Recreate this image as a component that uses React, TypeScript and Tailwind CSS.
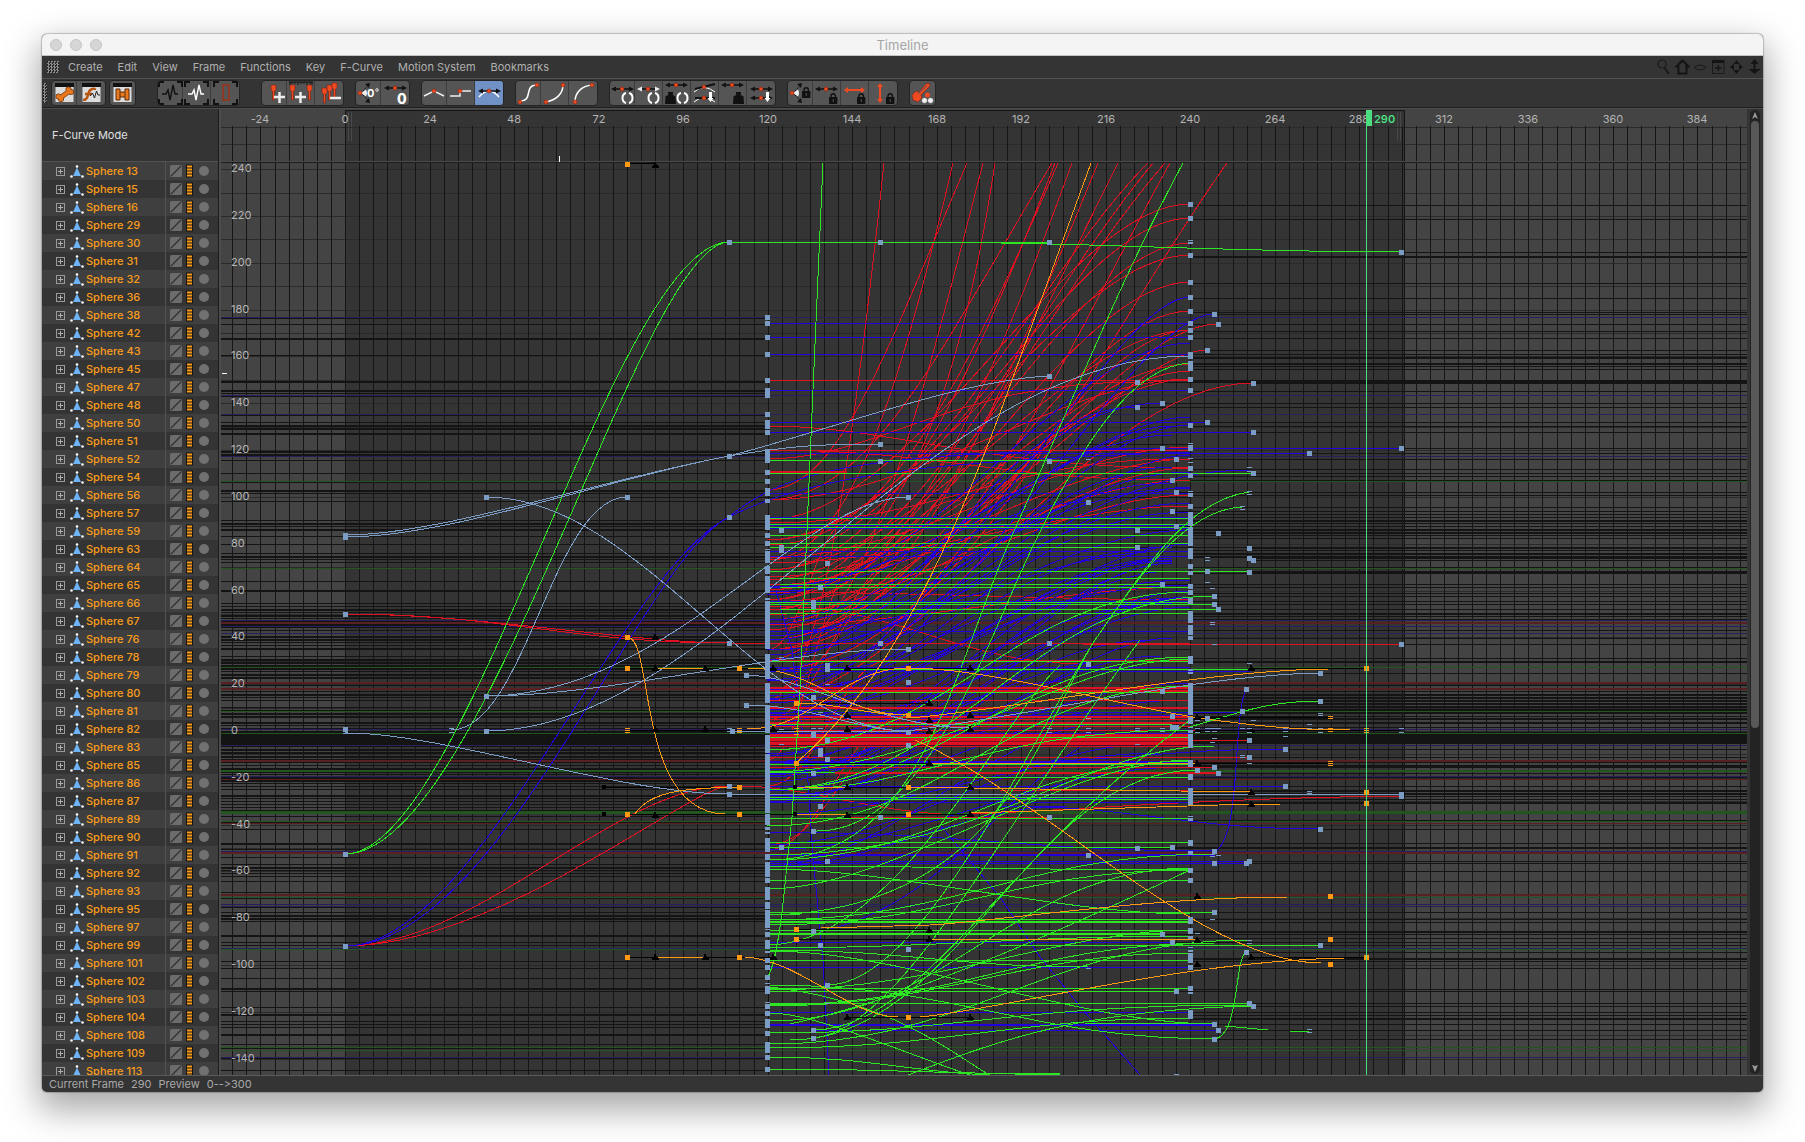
import type { ReactNode } from "react";

const MENUS = ["Create", "Edit", "View", "Frame", "Functions", "Key", "F-Curve", "Motion System", "Bookmarks"];

const SPHERES = [
  13, 15, 16, 29, 30, 31, 32, 36, 38, 42, 43, 45, 47, 48, 50, 51, 52, 54, 56, 57, 59, 63, 64, 65, 66, 67, 76, 78, 79,
  80, 81, 82, 83, 85, 86, 87, 89, 90, 91, 92, 93, 95, 97, 99, 101, 102, 103, 104, 108, 109, 113,
];

const RED = "#dd1122";
const GREEN = "#2de622";
const BLUE = "#2200dd";
const STEEL = "#7b9cc4";
const ORANGE = "#ff9911";
const KEY_RED = "#f04a23";

/* ---------- graph data (window coordinates, shifted by the plot group) ---------- */

const LEFT = 221;
const TOP = 109;
const ZERO_X = 345;
const FRAME_W = 3.522;
const ZERO_Y = 731;
const UNIT_H = 2.341;

const frameX = (f: number) => Math.round(ZERO_X + f * FRAME_W);
const valueY = (v: number) => Math.round(ZERO_Y - v * UNIT_H);

// runs of keys stacked at frame 120 and frame 240: [top, bottom]
const COL_120: [number, number][] = [
  [315, 320], [321, 326], [335, 340], [352, 357], [378, 383], [388, 398], [412, 417], [420, 429], [430, 435],
  [449, 463], [470, 475], [479, 484], [488, 496], [499, 503], [515, 530], [533, 538], [541, 546], [549, 550],
  [551, 563], [566, 574], [576, 593], [598, 600], [601, 649], [654, 679], [683, 703], [705, 733], [735, 753],
  [754, 813], [814, 825], [827, 830], [832, 834], [838, 852], [854, 860], [862, 877], [878, 883], [887, 900],
  [902, 909], [910, 928], [929, 930], [932, 937], [940, 949], [951, 953], [958, 963], [965, 970], [975, 980],
  [983, 984], [986, 994], [1002, 1003], [1004, 1009], [1011, 1016], [1019, 1028], [1031, 1036], [1042, 1053],
  [1055, 1060], [1067, 1072],
];

const COL_240: [number, number][] = [
  [202, 207], [216, 221], [240, 241], [242, 244], [253, 258], [280, 285], [295, 300], [309, 314], [321, 326],
  [328, 333], [335, 340], [352, 359], [361, 371], [377, 382], [388, 393], [423, 428], [443, 444], [445, 451],
  [458, 459], [462, 463], [466, 471], [473, 478], [491, 492], [493, 497], [504, 509], [512, 526], [527, 546],
  [548, 559], [564, 569], [571, 575], [584, 589], [590, 595], [598, 604], [611, 623], [625, 635], [636, 640],
  [656, 664], [669, 671], [672, 674], [683, 715], [717, 724], [727, 728], [730, 733], [734, 748], [760, 767],
  [774, 780], [788, 805], [816, 817], [818, 821], [840, 846], [851, 855], [868, 873], [878, 883], [917, 924],
  [928, 934], [936, 939], [947, 948], [950, 952], [953, 963], [965, 970], [986, 991], [992, 994], [1010, 1019],
];

// x -> y list of single keys
const KEYS: [number, number[]][] = [
  [345, [535, 537, 614, 729, 854, 946]],
  [486, [497, 696, 731]],
  [627, [497]],
  [729, [242, 456, 517, 643, 786, 794]],
  [732, [731]],
  [746, [675, 705]],
  [781, [530, 547, 550, 847]],
  [813, [602, 606, 697, 735, 773, 831, 931, 1030, 1038]],
  [820, [587, 750, 754, 806, 945]],
  [827, [563, 665, 669, 740, 759, 861, 985]],
  [880, [242, 444, 461, 643, 817]],
  [908, [497, 649, 682, 732, 745, 949]],
  [1049, [242, 376, 461, 643, 817]],
  [1088, [502, 664, 855]],
  [1137, [382, 407, 530, 547, 848]],
  [1162, [403, 448, 584, 691, 934]],
  [1172, [480, 511, 716, 727, 847, 942]],
  [1176, [459, 492, 526, 727, 991]],
  [1197, [770]],
  [1207, [350, 422, 571, 718]],
  [1214, [314, 596, 604, 767, 851, 863, 912, 1024, 1039]],
  [1218, [324, 533, 609, 773, 1030]],
  [1242, [711]],
  [1246, [689, 863, 952]],
  [1249, [548, 558, 572, 740, 757, 861, 1003]],
  [1253, [383, 432, 473, 560, 1006]],
  [1285, [749, 786]],
  [1309, [453]],
  [1320, [673, 701, 829, 945]],
  [1401, [252, 448, 644, 794, 796]],
];

// overlapping keys that only leave thin slivers
const SLIVERS: [number, number[]][] = [
  [345, [733]],
  [451, [728, 732]],
  [729, [728, 731]],
  [781, [657, 729, 744]],
  [813, [611, 728, 732, 991]],
  [820, [712, 728, 748]],
  [827, [684, 1003]],
  [880, [728, 731]],
  [1049, [728, 732]],
  [1088, [459, 718, 728, 732, 968]],
  [1137, [728, 730, 744]],
  [1162, [728, 731]],
  [1197, [720, 728, 732, 933]],
  [1207, [557, 560, 582, 728, 731]],
  [1212, [588, 622, 624, 728, 742, 854, 856, 919]],
  [1214, [644, 728, 731, 738]],
  [1218, [728, 855]],
  [1242, [506, 509, 728, 755, 757]],
  [1249, [467, 471, 491, 494, 663, 728, 732, 763, 940, 943]],
  [1253, [381, 720]],
  [1285, [728, 731, 736]],
  [1309, [724, 728, 791, 793, 1029, 1032]],
  [1320, [713, 715, 728, 732]],
  [1401, [728, 732]],
  [1176, [1074]],
];

const ORANGE_KEYS: [number, number[]][] = [
  [627, [164, 637, 668, 814, 957]],
  [739, [668, 787, 814, 957]],
  [796, [703, 763, 929, 939]],
  [908, [668, 715, 787, 814, 1017]],
  [1330, [896, 939, 964]],
  [1366, [668, 792, 803, 957]],
];

const ORANGE_SLIVERS: [number, number[]][] = [
  [627, [728, 730, 732]],
  [739, [728, 730, 732]],
  [796, [717, 728, 731, 734]],
  [1330, [716, 718, 728, 731, 761, 763, 765]],
  [1366, [728, 730, 732]],
];

const HANDLES: [number, number[]][] = [
  [655, [165, 637, 668, 729, 815, 957]],
  [705, [668, 729, 957]],
  [773, [668, 729, 957]],
  [847, [668, 715, 729, 787, 815, 1017]],
  [929, [703, 720, 731, 763, 930, 939]],
  [970, [668, 715, 729, 787, 814, 1017]],
  [1197, [717, 730, 763, 896, 940, 964]],
  [1251, [668, 730, 792, 804, 957]],
];

const DOTS: [number, number][] = [[604, 787], [604, 814], [795, 787], [795, 814]];

// dim out-of-range curves: [y, height]
const DIM: { color: string; rows: [number, number][] }[] = [
  { color: "#27205c", rows: [[317, 1], [395, 1], [414, 1], [456, 1], [620, 1], [626, 1], [633, 1], [729, 1], [745, 1], [776, 1], [851, 1], [904, 1], [906, 1], [948, 1], [1057, 1]] },
  { color: "#22561f", rows: [[481, 1], [568, 1], [667, 1], [711, 1], [733, 1], [770, 2], [811, 3], [821, 1], [897, 1], [949, 1], [1047, 1], [1050, 1]] },
  { color: "#5a1f22", rows: [[622, 2], [682, 2], [688, 2], [760, 2], [779, 1], [823, 1], [852, 2], [894, 2]] },
];

// flat curves: [x0, x1, y, height]
const FLAT: { color: string; rows: [number, number, number, number][] }[] = [
  {
    color: BLUE,
    rows: [
      [770, 1190, 323, 1], [770, 1190, 337, 1], [770, 1190, 354, 1], [770, 1190, 390, 1], [770, 1207, 422, 1],
      [770, 1253, 432, 1], [770, 1309, 453, 1], [1075, 1401, 448, 1], [770, 1190, 493, 1], [770, 1190, 517, 1],
      [770, 1190, 525, 1], [770, 1190, 528, 1], [770, 1190, 551, 1], [770, 1190, 556, 1], [770, 1190, 601, 1],
      [770, 1190, 631, 1], [770, 1190, 667, 1], [770, 1250, 671, 1], [770, 1242, 712, 1], [770, 1190, 715, 1],
      [770, 1190, 733, 1], [770, 1190, 761, 2], [770, 1285, 786, 1], [770, 1190, 798, 1], [770, 1190, 802, 1],
      [770, 1190, 842, 1], [770, 1215, 854, 2], [770, 1246, 861, 1], [770, 1246, 863, 1], [770, 1172, 942, 1],
      [770, 1190, 967, 1], [770, 1190, 1012, 1], [770, 1214, 1024, 2], [813, 1218, 1030, 1], [770, 860, 930, 1],
    ],
  },
  {
    color: GREEN,
    rows: [
      [729, 1049, 242, 1], [770, 1068, 460, 1], [767, 1253, 473, 1], [770, 1190, 518, 1], [770, 1190, 524, 1],
      [770, 1190, 527, 1], [770, 1190, 535, 1], [770, 1190, 543, 1], [770, 1137, 547, 1], [770, 1249, 571, 1],
      [780, 1190, 578, 1], [780, 1162, 584, 1], [780, 1190, 587, 1], [770, 1190, 602, 1], [770, 1214, 604, 1],
      [780, 1218, 609, 1], [770, 1190, 613, 1], [770, 1190, 661, 1], [827, 1250, 669, 1], [770, 1190, 692, 1],
      [770, 1172, 724, 1], [770, 1190, 764, 1], [770, 880, 772, 1], [916, 1190, 777, 1], [770, 1190, 797, 1],
      [770, 1190, 799, 1], [770, 1190, 818, 1], [770, 1190, 842, 1], [770, 1172, 847, 1], [770, 1190, 880, 1],
      [770, 1214, 912, 1], [770, 1190, 919, 1], [770, 1190, 921, 2], [770, 1190, 930, 1], [770, 1162, 933, 2],
      [1000, 1320, 945, 1], [770, 1190, 960, 1], [770, 1190, 988, 1], [770, 1176, 991, 1], [770, 1249, 1003, 1],
      [770, 800, 914, 1], [1085, 1214, 1023, 1], [1015, 1060, 1074, 1],
    ],
  },
  {
    color: RED,
    rows: [
      [770, 1190, 380, 1], [770, 847, 471, 2], [770, 1190, 450, 1], [729, 1190, 643, 1], [1083, 1401, 644, 1],
      [770, 1190, 660, 1], [770, 1190, 687, 2], [770, 1190, 690, 2], [770, 1190, 700, 1], [770, 1190, 707, 2],
      [770, 1190, 716, 2], [770, 1190, 719, 1], [770, 1190, 722, 2], [770, 1190, 726, 1], [770, 1285, 730, 1],
      [770, 1190, 734, 3], [770, 1190, 738, 4], [770, 1190, 742, 4], [1190, 1249, 740, 1], [770, 1190, 746, 1],
      [770, 1249, 757, 1], [770, 1214, 767, 1], [835, 1218, 772, 2], [850, 1049, 817, 1], [1000, 1190, 790, 1],
    ],
  },
];

const ease = (x0: number, y0: number, x1: number, y1: number, a = 0.42, b = 0.42) =>
  `M${x0} ${y0}C${x0 + (x1 - x0) * a} ${y0} ${x1 - (x1 - x0) * b} ${y1} ${x1} ${y1}`;

// small seeded generator so the fans of curves are the same on every load
function seeded(seed: number) {
  let s = seed;
  return () => {
    s = (s * 16807) % 2147483647;
    return s / 2147483647;
  };
}

// curves that leave through the top edge: start y, exit x, end handle x, end handle y
const redTop: [number, number, number, number][] = [
  [700, 884, 846, 520], [560, 953, 893, 420], [490, 967, 885, 355], [660, 983, 910, 450], [590, 995, 955, 430],
  [500, 1052, 940, 350], [570, 1055, 955, 420], [545, 1058, 940, 440], [610, 1072, 975, 430], [640, 1098, 985, 440],
  [625, 1118, 990, 420], [540, 1148, 1030, 280], [580, 1153, 1015, 330], [600, 1165, 1020, 330], [650, 1170, 1060, 360],
  [670, 1227, 1080, 370],
];

const redCurves = [
  ease(345, 614, 729, 643),
  ease(345, 614, 729, 643, 0.35, 0.25),
  ease(345, 946, 729, 786, 0.35, 0.3),
  ease(345, 946, 729, 786, 0.4, 0.1),
  ...redTop.map(([y0, x, hx, hy]) => `M767 ${y0}C${Math.round(767 + (hx - 767) * 0.6)} ${y0} ${hx} ${hy} ${x} 163`),
  ...[
    [520, 204], [560, 218], [600, 243], [540, 255], [610, 282], [650, 311], [570, 330], [630, 371], [590, 379],
    [500, 379], [700, 330], [558, 447], [577, 459], [615, 468], [602, 495], [563, 506], [590, 364], [585, 480],
    [592, 600], [625, 587],
  ].map(([a, b]) => ease(767, a, 1190, b, 0.35, 0.3)),
  ease(767, 426, 1190, 468, 0.3, 0.5),
  ease(767, 459, 1137, 382, 0.3, 0.5),
  ease(767, 450, 1172, 480),
  ease(767, 523, 1176, 459),
  ease(767, 640, 1218, 324, 0.35, 0.25),
  ease(767, 620, 1207, 350, 0.35, 0.2),
  ease(767, 700, 1253, 383, 0.3, 0.35),
  ease(770, 606, 1088, 664),
  ease(739, 786, 970, 815, 0.3, 0.4),
  "M970 814C1050 812 1200 798 1401 796",
  ease(767, 786, 890, 660), ease(767, 850, 900, 720), ease(767, 845, 930, 700), ease(767, 760, 860, 560),
  ease(767, 720, 900, 560), ease(767, 650, 850, 520), ease(767, 690, 960, 500),
];

const rb = seeded(4177);
const blueCurves = [
  "M345 946C480 946 620 570 729 517C790 465 880 452 1190 448",
  "M345 946C500 946 640 560 729 517C820 470 960 461 1190 452",
  ease(767, 700, 1190, 297, 0.35, 0.2),
  ease(767, 720, 1214, 314, 0.35, 0.2),
  ease(767, 640, 1162, 403),
  ease(767, 660, 1137, 407),
  ease(767, 690, 1190, 425, 0.35, 0.3),
  ease(767, 620, 1088, 502),
  ease(767, 650, 1249, 470),
  ...Array.from({ length: 34 }, () => {
    const y0 = 580 + rb() * 220;
    const y1 = y0 - 70 - rb() * 190;
    const x1 = rb() > 0.3 ? 1190 : 1172;
    return ease(767, Math.round(y0), x1, Math.round(y1), 0.3 + rb() * 0.15, 0.25 + rb() * 0.2);
  }),
  ...Array.from({ length: 9 }, () => {
    const y0 = 760 + rb() * 110;
    return ease(767, Math.round(y0), 1000 + Math.round(rb() * 190), Math.round(y0 - 60 - rb() * 90), 0.35, 0.35);
  }),
  "M776 590L792 650L807 767L813 857L823 960L829 1075",
  "M940 825L1000 897L1040 957L1083 1010L1140 1075",
  "M1214 852C1242 840 1232 720 1246 689",
  ease(1000, 806, 1320, 829),
  ease(1000, 762, 1285, 749),
  ease(770, 832, 1214, 851),
  "M827 930C950 900 1000 790 1100 735",
];

const greenCurves = [
  ease(345, 854, 729, 242, 0.32, 0.3),
  "M345 854C485 854 640 242 729 242",
  "M1000 243C1100 244 1250 252 1401 252",
  "M823 163L813 390L804 600L800 690L792 817L782 913C777 950 773 970 767 978",
  "M1183 163C1120 280 1060 430 1010 540C950 680 920 858 770 860",
  "M1190 363C1130 366 1080 450 1037 538C990 630 930 835 813 831",
  "M1249 492C1190 500 1150 560 1093 643C1020 760 920 985 827 985",
  "M1242 507C1180 510 1130 590 1093 643C1040 730 1000 910 770 915",
  ease(767, 750, 1190, 592),
  ease(767, 790, 1214, 596),
  ease(767, 772, 1190, 659, 0.4, 0.3),
  ease(767, 790, 1190, 657),
  ease(767, 826, 1190, 686),
  "M1190 727C1240 712 1270 701 1320 701",
  ease(780, 790, 1190, 730, 0.35, 0.5),
  ease(767, 855, 1214, 746, 0.5, 0.3),
  ease(767, 860, 1190, 761),
  ease(790, 1040, 1197, 770),
  "M813 1030C920 1030 1000 860 1190 720",
  "M770 945C900 940 1000 720 1060 665",
  "M813 1038C900 1030 1000 830 1140 640",
  ease(767, 869, 1190, 914, 0.3, 0.3),
  ease(767, 889, 1190, 760, 0.3, 0.3),
  ease(770, 925, 1190, 870),
  ease(770, 920, 1212, 854),
  ease(770, 866, 1190, 870),
  ease(770, 948, 1190, 936),
  ease(770, 950, 1088, 967),
  ease(770, 990, 1190, 930, 0.4, 0.3),
  ease(770, 1005, 1214, 943),
  ease(770, 1006, 1190, 953),
  ease(770, 1021, 1190, 868),
  ease(770, 1033, 1249, 1005, 0.4, 0.5),
  ease(770, 1044, 1249, 940),
  ease(770, 1048, 1190, 1018),
  ease(770, 951, 1214, 1024, 0.3, 0.3),
  ease(770, 985, 1218, 1039),
  ease(770, 1013, 1120, 1110, 0.2, 0.3),
  ease(770, 1057, 1030, 1076),
  ease(770, 1069, 1060, 1074),
  "M790 1024C900 1000 1020 950 1190 870",
  "M908 1075C1000 1040 1080 1010 1253 1006",
  "M770 987C900 1002 960 1060 990 1075",
  "M1214 1039C1240 1036 1234 960 1246 952",
  "M1225 1026L1268 1030M1290 1031L1309 1031",
];

const steelCurves = [
  "M345 535C440 535 600 480 729 456C830 430 960 380 1049 376",
  "M345 537C450 537 610 478 729 456C790 446 820 444 880 444",
  ease(486, 497, 908, 731, 0.37, 0.35),
  ease(451, 730, 627, 497),
  "M486 696C670 696 800 497 908 497",
  "M486 731C720 731 920 356 1190 356",
  ease(486, 696, 908, 649, 0.3, 0.3),
  "M345 733C440 732 620 794 729 794L1401 794",
  ease(746, 675, 970, 728, 0.25, 0.4),
  ease(746, 705, 908, 731, 0.4, 0.3),
  "M732 731L908 731C1050 712 1200 675 1320 673",
];

const orangeCurves = [
  "M627 637C655 637 635 812 725 814",
  "M635 814C650 790 690 788 739 787",
  "M655 668H705M655 957H705M796 787H847M796 814H847M908 787H970",
  "M745 957C800 960 850 1017 898 1017",
  "M920 1017C1000 1010 1180 961 1345 958",
  "M915 740C1050 800 1200 963 1321 963",
  "M796 763C870 700 930 600 1000 413L1091 163",
  ease(748, 668, 908, 715),
  ease(747, 729, 908, 668),
  "M908 668C1000 668 1150 715 1230 722C1280 729 1320 730 1350 730",
  "M908 718C1000 712 1200 670 1328 669",
  ease(796, 703, 908, 715),
  "M970 788L1250 792M970 813L1250 804H1280M929 763H1195M932 939H1195",
  "M821 928L930 925C1000 921 1150 897 1287 897",
];

const blackCurves =
  "M627 163H655M627 668H739M739 668H773M627 957H773M847 668H970M847 787H908M604 787H739M627 814H847M796 703H929M796 929H929M796 939H929M796 763H929M847 1017H970M1251 668H1366M1197 763H1330M1197 717H1330M1197 730H1401M1251 957H1366M847 814H970M627 730H796";

// extrapolation lines that leave the outer keys
function extrapolation(runs: [number, number][], seed: number) {
  const r = seeded(seed);
  const rows: [number, number][] = [];
  runs.forEach(([a, b]) => {
    if (b - a < 3) return;
    if (b - a < 7) {
      rows.push([Math.round((a + b) / 2), r() > 0.8 ? 2 : 1]);
      return;
    }
    for (let y = a + 2; y < b; y += 3) if (r() > 0.08) rows.push([y, r() > 0.6 ? 2 : 1]);
  });
  return rows;
}

const leftRows = extrapolation(COL_120, 991);
const rightRows = extrapolation(COL_240, 373);

function Squares({ data, color }: { data: [number, number[]][]; color: string }) {
  return (
    <g fill={color}>
      {data.map(([x, ys]) => ys.map((y) => <rect key={`${x}-${y}`} x={x - 2} y={y - 2} width="5" height="5" />))}
    </g>
  );
}

function Slivers({ data, color }: { data: [number, number[]][]; color: string }) {
  return (
    <g fill={color}>
      {data.map(([x, ys]) => ys.map((y) => <rect key={`${x}-${y}`} x={x - 2} y={y} width="5" height="1" />))}
    </g>
  );
}

function Curves({ paths, color }: { paths: string[]; color: string }) {
  return <path d={paths.join("")} fill="none" stroke={color} strokeWidth="1" />;
}

function Graph() {
  const frames = Array.from({ length: 300 }, (_, i) => -32 + i * 4);
  const values = Array.from({ length: 60 }, (_, i) => 240 - i * 10);

  return (
    <svg className="block h-full w-full" role="img" aria-label="F-Curve graph" shapeRendering="crispEdges">
      <g transform={`translate(${-LEFT} ${-TOP})`}>
        <rect x={LEFT} y={TOP} width="4000" height="3000" fill="#444444" />
        <rect x="345" y="110" width="1059" height="3000" fill="#343434" />
        <path d="M345 110h1060v17h-1v-16h-1058v16h-1z" fill="#151515" />
        <path d="M348 112v29M351 112v29M1397 112v29M1400 112v29" stroke="#484848" />

        {/* grid */}
        <path d="M221 127h4000M221 144h4000" stroke="#2a2a2a" />
        <path d={values.map((v) => `M221 ${valueY(v)}h4000`).join("")} stroke="#2a2a2a" />
        <path d={frames.map((f) => `M${frameX(f)} 126v3000`).join("") + "M1404 126v3000"} stroke="#151515" />
        <rect x={LEFT} y="161" width="4000" height="1" fill="#4c4c4c" />
        <rect x={LEFT} y="162" width="4000" height="1" fill="#1c1c1c" />
        <path d="M559 156v6M222 373h5" stroke="#ffffff" />

        <g fill="#141414">
          {leftRows.map(([y, h]) => <rect key={y} x={LEFT} y={y} width={767 - LEFT} height={h} />)}
          {rightRows.map(([y, h]) => <rect key={y} x="1190" y={y} width="3000" height={h} />)}
          {KEYS.filter(([x]) => x > 1130).map(([x, ys]) =>
            ys.map((y) => <rect key={`${x}-${y}`} x={x} y={y} width="3000" height="1" />)
          )}
          <rect x={LEFT} y="734" width="546" height="11" />
          <rect x="1190" y="734" width="3000" height="10" />
          <rect x="627" y="497" width="563" height="1" />
          <rect x="880" y="444" width="310" height="1" />
          <rect x="908" y="649" width="282" height="1" />
        </g>

        {DIM.map(({ color, rows }) => (
          <g key={color} fill={color}>
            {rows.map(([y, h]) => <rect key={y} x={LEFT} y={y} width="4000" height={h} />)}
          </g>
        ))}

        {/* value labels */}
        <g fill="#b4b4b4" fontSize="11" fontFamily="Inter, sans-serif">
          {values.filter((v) => v % 20 === 0 && v >= -140).map((v) => (
            <text key={v} x="231" y={valueY(v) + 3}>{v}</text>
          ))}
        </g>

        {/* curves */}
        <Curves paths={redCurves} color={RED} />
        <Curves paths={blueCurves} color={BLUE} />
        {FLAT.map(({ color, rows }) => (
          <g key={color} fill={color}>
            {rows.map(([x0, x1, y, h]) => <rect key={`${x0}-${y}`} x={x0} y={y} width={x1 - x0} height={h} />)}
          </g>
        ))}
        <rect x="770" y="737" width="420" height="1" fill={GREEN} />
        <rect x="770" y="741" width="420" height="1" fill="#7a1420" />
        <rect x="770" y="745" width="420" height="1" fill="#3a1030" />
        <Curves paths={greenCurves} color={GREEN} />
        <path d={blackCurves} stroke="#000000" />
        <Curves paths={steelCurves} color={STEEL} />
        <Curves paths={orangeCurves} color={ORANGE} />

        {/* keys */}
        <g fill={STEEL}>
          {COL_120.map(([a, b]) => <rect key={a} x="765" y={a} width="5" height={b - a} />)}
          {COL_240.map(([a, b]) => <rect key={a} x="1188" y={a} width="5" height={b - a} />)}
        </g>
        <g fill="#000000">
          {HANDLES.map(([x, ys]) =>
            ys.map((y) => <path key={`${x}-${y}`} d={`M${x - 1} ${y - 3}h2l1 3l2 1v2h-7v-2l2 -1z`} />)
          )}
          {DOTS.map(([x, y]) => <circle key={`${x}-${y}`} cx={x} cy={y} r="2.5" />)}
        </g>
        <Squares data={KEYS} color={STEEL} />
        <Slivers data={SLIVERS} color={STEEL} />
        <Squares data={ORANGE_KEYS} color={ORANGE} />
        <Slivers data={ORANGE_SLIVERS} color={ORANGE} />

        {/* ruler labels */}
        <g fill="#b4b4b4" fontSize="11" fontFamily="Inter, sans-serif" textAnchor="middle">
          {Array.from({ length: 18 }, (_, i) => -24 + i * 24).map((f) => (
            <text key={f} x={frameX(f)} y="123">{f}</text>
          ))}
        </g>

        {/* playhead */}
        <rect x="1366" y="110" width="6" height="16" fill="#4ade80" />
        <rect x="1366" y="110" width="1" height="3000" fill="#4ade80" />
        <rect x="1373" y="112" width="22" height="14" fill="#343434" />
        <text x="1374" y="123" fill="#4ade80" fontSize="11" fontWeight="600" fontFamily="Inter, sans-serif">290</text>
      </g>
    </svg>
  );
}

/* ---------- toolbar icons, drawn on a 27 x 26 board ---------- */

const Node = ({ x, y }: { x: number; y: number }) => <circle cx={x} cy={y} r="2" fill={KEY_RED} stroke="#7a1c08" strokeWidth="0.5" />;

const Bar = ({ y, tips = "#111111", x = 2 }: { y: number; tips?: string; x?: number }) => (
  <>
    <path d={`M${x + 3} ${y}h17`} stroke="#111111" strokeWidth="1.4" />
    <path d={`M${x} ${y}l5 -2.5v5zM${x + 23} ${y}l-5 -2.5v5z`} fill={tips} />
    <Node x={x + 11} y={y} />
  </>
);

const Lock = ({ x, y }: { x: number; y: number }) => (
  <>
    <path d={`M${x + 2} ${y + 5}v-2a2.2 2.2 0 0 1 4.400 0v2`} fill="none" stroke="#111111" strokeWidth="1.4" />
    <rect x={x} y={y + 4} width="8.400" height="7" rx="0.8" fill="#111111" />
    <rect x={x + 3.7} y={y + 6} width="1" height="3" fill="#555555" />
  </>
);

const Parens = ({ x, y }: { x: number; y: number }) => (
  <path d={`M${x + 4} ${y}q-3.500 1 -3.500 5t3.500 5M${x + 7} ${y}q3.500 1 3.500 5t-3.500 5`} fill="none" stroke="#ffffff" strokeWidth="2" />
);

const Weight = ({ x }: { x: number }) => (
  <path d={`M${x + 3} 12h5v2.500h-1l3.500 2l0.500 7.500h-11l0.500 -7.500l3.500 -2h-1z`} fill="#111111" />
);

const Down = ({ x, y }: { x: number; y: number }) => <path d={`M${x} ${y}h3v6h1.500l-3 4l-3 -4h1.500z`} fill="#ffffff" />;

const Plus = ({ x, y }: { x: number; y: number }) => (
  <path d={`M${x} ${y + 5}h11M${x + 5.5} ${y}v11`} stroke="#eeeeee" strokeWidth="2.500" />
);

const Brackets = () => (
  <path d="M2 7V2h5M20 2h5v5M25 19v5h-5M7 24H2v-5" fill="none" stroke="#111111" strokeWidth="2" />
);

const Frame = ({ children }: { children: ReactNode }) => (
  <>
    <rect x="4" y="3" width="19" height="4" fill="#111111" />
    <rect x="4.500" y="7" width="18" height="15" fill="#dcdcdc" />
    {children}
  </>
);

const Pin = ({ x, y }: { x: number; y: number }) => (
  <path d={`M${x} ${y}h5v5l-1.500 1v9h-2v-9l-1.500 -1z`} fill={KEY_RED} stroke="#6b1a08" strokeWidth="0.5" />
);

const Angle = () => (
  <>
    <path d="M6 13L14 5M6 13L14 21" stroke="#111111" strokeDasharray="2 1" />
    <path d="M15 3l-1 5l-4 -4zM15 23l-1 -5l-4 4z" fill="#111111" />
    <path d="M6 13l5 -3.500q2 3.500 0 7z" fill="#eeeeee" />
    <Node x={5} y={13} />
  </>
);

const Bone = () => (
  <>
    <g fill="#7a3c10">
      <circle cx="17.500" cy="9.500" r="3" />
      <circle cx="20" cy="12" r="3" />
      <circle cx="7.500" cy="16.500" r="3" />
      <circle cx="10" cy="19" r="3" />
      <path d="M9 18L18.500 11" stroke="#7a3c10" strokeWidth="5" />
    </g>
    <g fill="#e8781e">
      <circle cx="17.500" cy="9.500" r="2.200" />
      <circle cx="20" cy="12" r="2.200" />
      <circle cx="7.500" cy="16.500" r="2.200" />
      <circle cx="10" cy="19" r="2.200" />
      <path d="M9 18L18.500 11" stroke="#e8781e" strokeWidth="3.500" />
    </g>
  </>
);

interface Tool {
  label: string;
  icon: ReactNode;
  active?: boolean;
}

const GROUPS: { gap: string; tools: Tool[] }[] = [
  {
    gap: "ml-1",
    tools: [
      { label: "Key Mode", icon: <Frame><Bone /></Frame> },
      { label: "F-Curve Mode", icon: <Frame><path d="M5 20q4 0 5 -5t4 -6q3 -1 3 1M7 14h7" fill="none" stroke="#b8560f" strokeWidth="2.500" /><path d="M12 16l2.500 -3l2 5l2 -7l1.500 4h2" fill="none" stroke="#222222" /></Frame> },
    ],
  },
  {
    gap: "ml-[3px]",
    tools: [
      { label: "Motion Mode", icon: <Frame><path d="M7 9h4v3h5v-3h4v11h-4v-3h-5v3h-4z" fill="#e8781e" stroke="#5a2c0c" /><path d="M11 12v5M16 12v5" stroke="#5a2c0c" /></Frame> },
    ],
  },
  {
    gap: "ml-[21px]",
    tools: [
      { label: "Frame All", icon: <><Brackets /><path d="M5 14h4l2 -4l2 10l3 -15l2 9h3" fill="none" stroke="#111111" strokeWidth="1.400" /></> },
      { label: "Frame Selected", icon: <><Brackets /><path d="M5 14h4l2 -4l2 10l3 -15l2 9h3" fill="none" stroke="#ffffff" strokeWidth="1.400" /></> },
      { label: "Frame Range", icon: <><Brackets /><rect x="11" y="5" width="6" height="15" fill="none" stroke="#9c3218" strokeWidth="1.500" /></> },
    ],
  },
  {
    gap: "ml-[21px]",
    tools: [
      { label: "Add Key", icon: <><Pin x={10} y={5} /><Plus x={13} y={12} /></> },
      { label: "Add Keys", icon: <><path d="M3 2v3M5 2v2M8 2v2M11 2v3M14 2v2M17 2v2M20 2v3M23 2v2M25 2v3M2 2h24" stroke="#111111" /><Pin x={3} y={5} /><Pin x={20} y={5} /><Plus x={8} y={12} /></> },
      { label: "Remove Keys", icon: <><Pin x={6} y={8} /><Pin x={11} y={5} /><Pin x={16} y={3} /><path d="M14 18h11" stroke="#eeeeee" strokeWidth="2.500" /></> },
    ],
  },
  {
    gap: "ml-[11px]",
    tools: [
      { label: "Zero Angle", icon: <><Angle /><text x="12" y="17" fontSize="11" fontWeight="700" fill="#ffffff">0</text><circle cx="22" cy="10" r="1.300" fill="none" stroke="#ffffff" strokeWidth="0.800" /></> },
      { label: "Zero Length", icon: <><Bar y={8} /><text x="15" y="24" fontSize="14" fontWeight="800" fill="#ffffff">0</text></> },
    ],
  },
  {
    gap: "ml-[11px]",
    tools: [
      { label: "Linear", icon: <><path d="M3 16L13 11L23 16" fill="none" stroke="#eeeeee" strokeWidth="1.500" /><Node x={13} y={11} /></> },
      { label: "Step", icon: <><path d="M3 16h10v-5h11" fill="none" stroke="#eeeeee" strokeWidth="1.500" /><Node x={13} y={11} /></> },
      { label: "Spline", active: true, icon: <><path d="M3 17Q13 5 23 17" fill="none" stroke="#ffffff" strokeWidth="1.500" /><Bar y={11} /></> },
    ],
  },
  {
    gap: "ml-[11px]",
    tools: [
      { label: "Ease Ease", icon: <><path d="M5 21C19 21 8 5 22 5" fill="none" stroke="#ffffff" strokeWidth="1.500" /><Node x={5} y={22} /><Node x={22} y={5} /></> },
      { label: "Ease In", icon: <><path d="M5 22C15 20 22 14 22 5" fill="none" stroke="#ffffff" strokeWidth="1.500" /><Node x={5} y={22} /><Node x={22} y={5} /></> },
      { label: "Ease Out", icon: <><path d="M5 22C5 12 12 6 22 5" fill="none" stroke="#ffffff" strokeWidth="1.500" /><Node x={5} y={22} /><Node x={22} y={5} /></> },
    ],
  },
  {
    gap: "ml-[11px]",
    tools: [
      { label: "Auto Tangents", icon: <><Bar y={9} /><Parens x={13} y={13} /></> },
      { label: "Classic Tangents", icon: <><Bar y={9} tips="#eeeeee" /><Parens x={13} y={13} /></> },
      { label: "Auto Weight", icon: <><Bar y={5} /><Weight x={2} /><Parens x={14} y={13} /></> },
      { label: "Remove Overshoot", icon: <><path d="M3 12Q13 3 24 12M3 22Q13 13 24 22" fill="none" stroke="#ffffff" /><path d="M4 9L24 4M4 18h20" stroke="#111111" strokeWidth="2" /><Node x={13} y={7} /><Node x={13} y={18} /><Down x={18} y={12} /></> },
      { label: "Weighted Tangent", icon: <><Bar y={5} /><Weight x={14} /></> },
      { label: "Break Tangents", icon: <><Bar y={9} /><Bar y={18} /><Down x={18} y={12} /></> },
    ],
  },
  {
    gap: "ml-[11px]",
    tools: [
      { label: "Lock Tangent Angle", icon: <><Angle /><Lock x={15} y={7} /></> },
      { label: "Lock Tangent Length", icon: <><Bar y={9} /><Lock x={16} y={13} /></> },
      { label: "Lock Time", icon: <><path d="M3 10l4 -3v2h13v-2l4 3l-4 3v-2h-13v2z" fill={KEY_RED} /><Lock x={16} y={13} /></> },
      { label: "Lock Value", icon: <><path d="M10 3l3 4h-2v12h2l-3 4l-3 -4h2v-12h-2z" fill={KEY_RED} /><Lock x={16} y={13} /></> },
    ],
  },
  {
    gap: "ml-[11px]",
    tools: [
      { label: "Breakdown", icon: <><path d="M3 15l4 -4l3 1l7 -8l3 -1l1 3l-9 9l1 3l-4 4l-5 -2z" fill={KEY_RED} stroke="#6b1a08" strokeWidth="0.500" /><path d="M9 14L18 6" stroke="#555555" /><circle cx="18.500" cy="15" r="2.500" fill={KEY_RED} /><circle cx="15.500" cy="20.500" r="3" fill="#eeeeee" stroke="#333333" strokeWidth="0.600" /><circle cx="21.500" cy="20.500" r="3" fill="#eeeeee" stroke="#333333" strokeWidth="0.600" /></> },
    ],
  },
];

function Toolbar() {
  return (
    <div className="flex h-[30px] shrink-0 items-center border-b border-b-[#1f1f1f] border-t border-t-[#525252] bg-[#343434] pl-[1px]">
      <Grip className="h-5 w-1" />
      {GROUPS.map((group, i) => (
        <div
          key={i}
          className={`${group.gap} flex h-[26px] divide-x divide-[#3c3c3c] overflow-hidden rounded border border-[#242424] bg-[#555555]`}
        >
          {group.tools.map((tool, n) => (
            <button
              key={tool.label}
              type="button"
              title={tool.label}
              aria-label={tool.label}
              className={`flex items-center justify-center ${n === 0 ? "w-[25px]" : "w-7"} ${tool.active ? "bg-[#7091c6]" : ""}`}
            >
              <svg width="27" height="26" viewBox="0 0 27 26" className="shrink-0" fontFamily="Inter, sans-serif">
                {tool.icon}
              </svg>
            </button>
          ))}
        </div>
      ))}
    </div>
  );
}

function Grip({ className }: { className: string }) {
  return (
    <span
      className={`${className} shrink-0 bg-[repeating-conic-gradient(#8a8a8a_0_25%,#262626_0_50%)] bg-[length:3px_3px]`}
    />
  );
}

const WINDOW_TOOLS: { label: string; icon: ReactNode }[] = [
  { label: "Search", icon: <><circle cx="5" cy="5" r="4" fill="none" stroke="#1a1a1a" strokeWidth="1.200" /><path d="M7 8l5 7" stroke="#1a1a1a" strokeWidth="2" /></> },
  { label: "Home", icon: <path d="M7.500 1.500L13.500 7.500H11.500V14.500H3.500V7.500H1.500Z" fill="none" stroke="#141414" strokeWidth="2" /> },
  { label: "Visibility", icon: <path d="M1 8.500q6 -5 12 0q-6 5 -12 0z" fill="none" stroke="#1a1a1a" /> },
  { label: "New Window", icon: <><path d="M1.500 1v13.500h11.500v-13.500" fill="none" stroke="#1a1a1a" /><rect x="1" y="1" width="12" height="3" fill="#141414" /><path d="M7.300 6v6M4 9h6.500" stroke="#141414" strokeWidth="1.500" /></> },
  { label: "Pan", icon: <path d="M7.500 1l3 4h-6zM7.500 15l3 -4h-6zM1 8l4 -3v6zM14 8l-4 -3v6z" fill="#141414" /> },
  { label: "Zoom", icon: <path d="M7.500 0l4 5h-3v5h5l-6 5l-6 -5h5v-5h-3z" fill="#141414" /> },
];

function MenuBar() {
  return (
    <nav className="flex h-[22px] shrink-0 items-center bg-[#343434] pl-[5px] pr-[1px]">
      <Grip className="h-3 w-3" />
      <div className="ml-[9px] flex flex-1 gap-[15px] text-[11px] leading-4 text-[#b0b0b0]">
        {MENUS.map((menu) => (
          <button key={menu} type="button">{menu}</button>
        ))}
      </div>
      <div className="flex gap-[3px]">
        {WINDOW_TOOLS.map((tool) => (
          <button key={tool.label} type="button" aria-label={tool.label}>
            <svg width="15" height="16" viewBox="0 0 15 16">{tool.icon}</svg>
          </button>
        ))}
      </div>
    </nav>
  );
}

function SphereRow({ id }: { id: number }) {
  return (
    <li className="flex h-[18px] shrink-0 items-center bg-[#343434] odd:bg-[#3f3f3f]">
      <div className="flex h-full w-[124px] items-center border-r border-[#525252] pl-[14px]">
        <button type="button" aria-label={`Expand Sphere ${id}`}>
          <svg width="9" height="9" viewBox="0 0 9 9" className="block" shapeRendering="crispEdges">
            <rect x="0.500" y="0.500" width="8" height="8" fill="none" stroke="#9a9a9a" />
            <path d="M2 4.500h5M4.500 2v5" stroke="#b0b0b0" />
          </svg>
        </button>
        <svg width="14" height="13" viewBox="0 0 14 13" className="ml-[5px] shrink-0">
          <path d="M7 2.500L11 11H3Z" fill="#6db3f5" />
          <circle cx="7" cy="1.500" r="1.300" fill="#ffffff" />
          <circle cx="1.500" cy="11.500" r="1.300" fill="#ffffff" />
          <circle cx="12.500" cy="11.500" r="1.300" fill="#ffffff" />
        </svg>
        <span className="ml-0.5 whitespace-nowrap text-[11px] font-medium leading-[18px] text-[#f99c1c]">Sphere {id}</span>
      </div>
      <svg width="40" height="14" viewBox="0 0 40 14" className="ml-1 shrink-0">
        <rect x="0" y="1" width="12" height="12" rx="1.500" fill="#6c6c6c" />
        <path d="M1 12L11 2" stroke="#303030" strokeWidth="1.300" />
        <rect x="16" y="0.500" width="7" height="13" fill="#151515" />
        <path d="M17 2.500h5M17 5.500h5M17 8.500h5M17 11.500h5" stroke="#f99c1c" strokeWidth="2" />
        <circle cx="34" cy="7" r="5" fill="#717171" />
      </svg>
    </li>
  );
}

function ScrollBar() {
  return (
    <div className="flex w-4 shrink-0 justify-center bg-[#343434] py-[1px]">
      <div className="flex w-[10px] flex-col items-center rounded-full bg-[#232323]">
        <svg width="10" height="11" viewBox="0 0 10 11" className="shrink-0">
          <path d="M5 2L8 9L5 7L2 9Z" fill="#9a9a9a" />
        </svg>
        <div className="w-2 basis-[63%] rounded-full bg-[#585858]" />
        <svg width="10" height="11" viewBox="0 0 10 11" className="mt-auto shrink-0">
          <path d="M5 9L2 2L5 3L8 2Z" fill="#9a9a9a" />
        </svg>
      </div>
    </div>
  );
}

export default function App() {
  return (
    <div className="h-screen bg-white px-[42px] pb-[50px] pt-[34px] font-['Inter',sans-serif]">
      <main className="flex h-full flex-col overflow-hidden rounded-[5px] bg-[#343434] shadow-[0_0_1px_1px_rgba(0,0,0,0.2),0_14px_34px_4px_rgba(0,0,0,0.34)]">
        <header className="relative flex h-[22px] shrink-0 items-center border-b border-[#c4c4c4] bg-[#f4f4f4] pl-2">
          <div className="flex gap-2">
            <span className="size-3 rounded-full border border-[#c4c4c4] bg-[#d6d6d6]" />
            <span className="size-3 rounded-full border border-[#c4c4c4] bg-[#d6d6d6]" />
            <span className="size-3 rounded-full border border-[#c4c4c4] bg-[#d6d6d6]" />
          </div>
          <h1 className="flex-1 pr-[60px] text-center text-[13px] leading-4 text-[#a6a6a6]">Timeline</h1>
        </header>

        <MenuBar />
        <Toolbar />

        <div className="flex min-h-0 flex-1 border-t border-[#4c4c4c]">
          <aside className="flex w-[177px] shrink-0 flex-col border-r border-[#1c1c1c]">
            <div className="flex h-[53px] shrink-0 items-center border-b border-[#525252] pl-[10px] text-[11px] leading-[18px] text-[#e0e0e0]">
              F-Curve Mode
            </div>
            <ul className="min-h-0 flex-1 overflow-hidden">
              {SPHERES.map((id) => (
                <SphereRow key={id} id={id} />
              ))}
            </ul>
          </aside>
          <section className="min-w-0 flex-1 overflow-hidden border-l-2 border-[#4c4c4c]">
            <Graph />
          </section>
          <ScrollBar />
        </div>

        <footer className="flex shrink-0 items-center gap-[7px] border-t border-[#5a5a5a] pl-[7px] text-[11px] leading-4 text-[#a8a8a8] [font-feature-settings:'calt'_0]">
          <span>Current Frame</span>
          <span>290</span>
          <span>Preview</span>
          <span>0--&gt;300</span>
        </footer>
      </main>
    </div>
  );
}
